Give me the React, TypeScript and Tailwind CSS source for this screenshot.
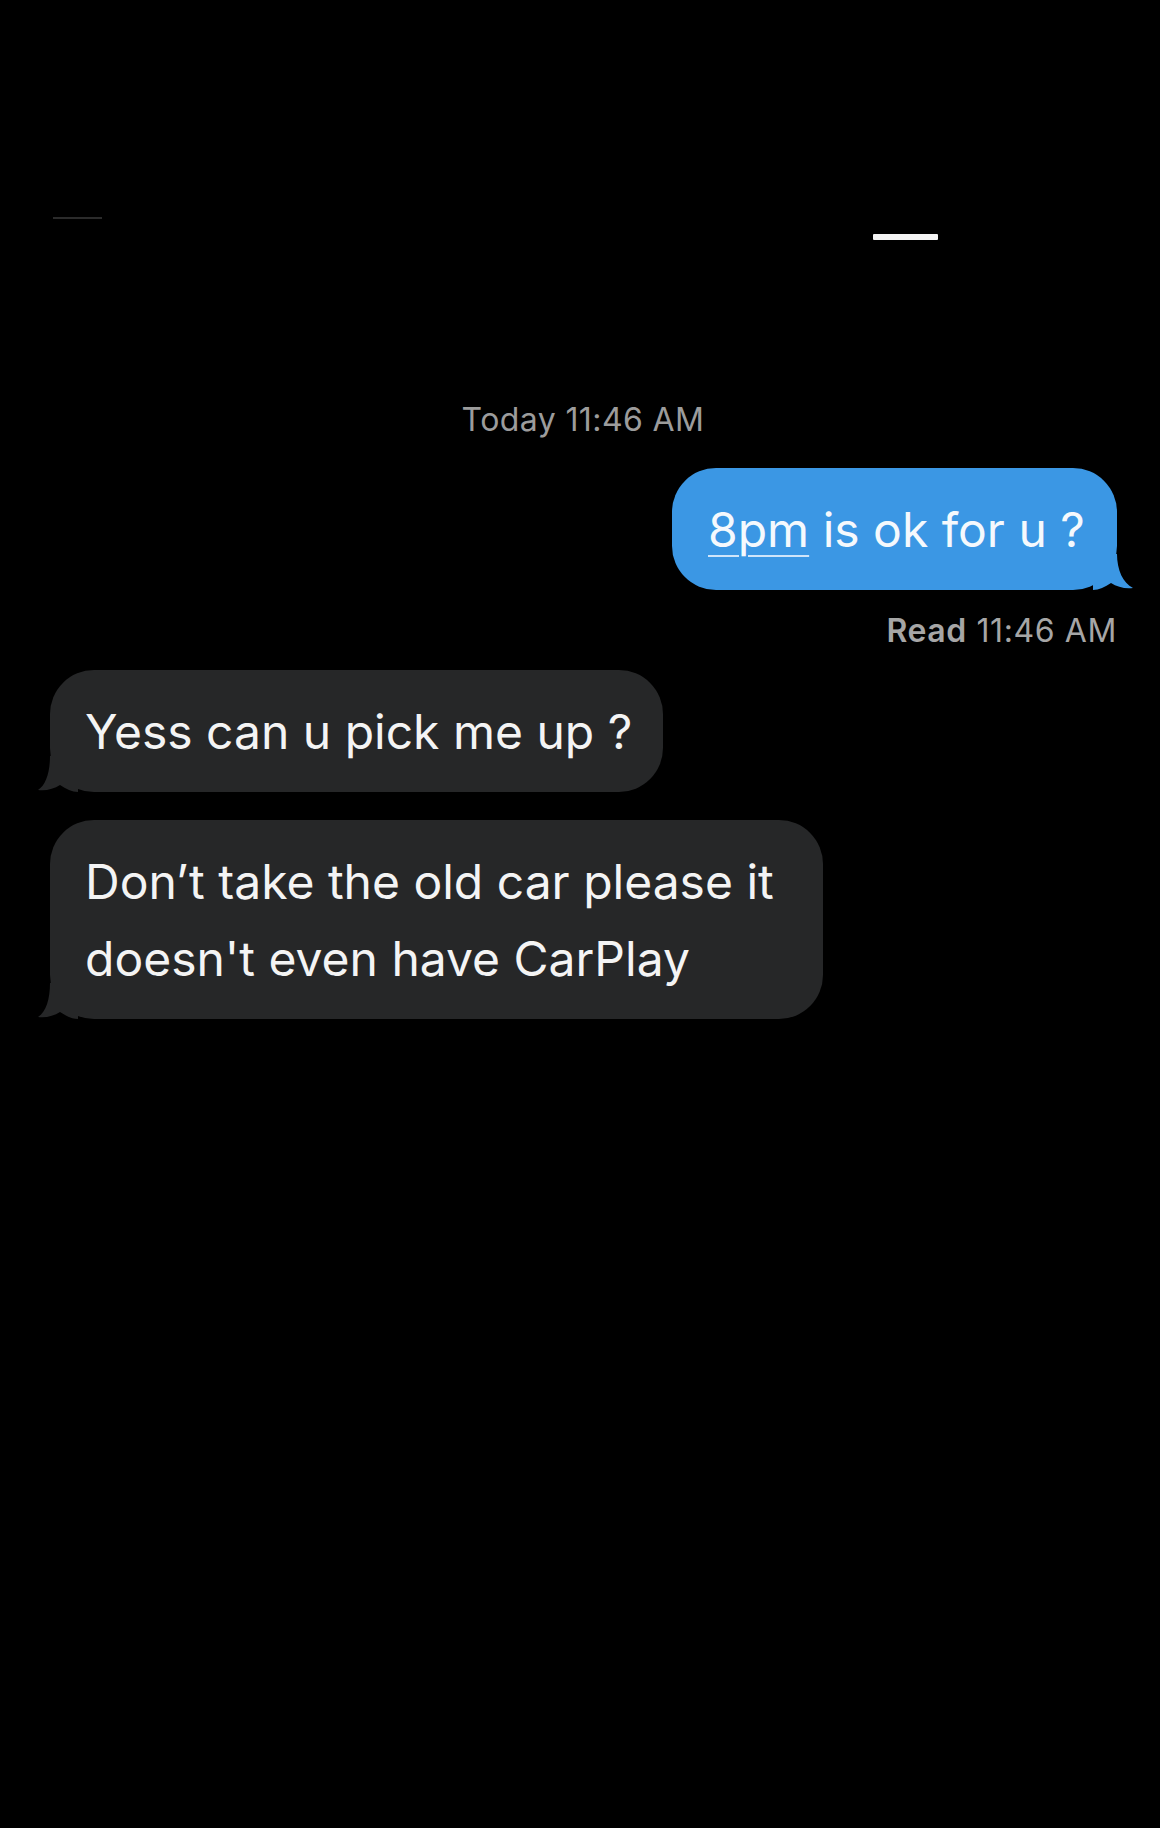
import React from 'react';

const BlueTail = () => (
  <svg
    className="absolute bottom-0 right-[-16px]"
    width="40"
    height="36"
    viewBox="0 0 40 36"
  >
    <path d="M0 0 H24 C24 16 30 29 40 34 C32 35 24 33 18 29 C12 33 6 36 0 36 Z" fill="#3b97e4" />
  </svg>
);

const GrayTail = () => (
  <svg
    className="absolute bottom-0 left-[-12px]"
    width="40"
    height="36"
    viewBox="0 0 40 36"
  >
    <path d="M40 0 H12 C12 16 8 29 0 34 C8 35 16 33 22 29 C28 33 34 36 40 36 Z" fill="#262728" />
  </svg>
);

export default function App() {
  return (
    <div
      className="w-full h-[1828px] bg-black overflow-hidden"
      style={{ fontFamily: 'Inter, "Noto Sans", "Liberation Sans", sans-serif' }}
    >
      {/* status strip */}
      <div className="flex items-start justify-between pt-[217px] pl-[53px] pr-[222px]">
        <div className="w-[49px] h-[2px] bg-[#2b2b2b]" />
        <div className="mt-[17px] w-[65px] h-[6px] bg-[#f4f4f4] rounded-[1px]" />
      </div>

      {/* day stamp */}
      <div className="mt-[161px] pl-[6px] text-center text-[32px] leading-[38px] tracking-[0.4px] text-[#9c9c9c]">
        Today 11:46 AM
      </div>

      {/* outgoing */}
      <div className="mt-[29px] flex justify-end pr-[43px]">
        <div className="relative w-[445px] rounded-[44px] bg-[#3b97e4] pl-[36px] pt-[23px] pb-[22px] text-[48px] leading-[77px] text-[#f5f9fd] whitespace-nowrap">
          <span className="underline decoration-[#cfe5fa] decoration-[1.5px] underline-offset-[8px]">8pm</span> is ok for u ?
          <BlueTail />
        </div>
      </div>
      <div className="mt-[22px] pr-[43px] text-right text-[32px] leading-[38px] tracking-[0.6px] text-[#a6a6a6]">
        <span className="font-semibold">Read</span> 11:46 AM
      </div>

      {/* incoming */}
      <div className="pl-[50px]">
        <div className="relative mt-[20px] w-[613px] rounded-[44px] bg-[#262728] pl-[35px] pt-[23px] pb-[22px] text-[48px] leading-[77px] text-[#f4f4f4] whitespace-nowrap">
          Yess can u pick me up ?
          <GrayTail />
        </div>
        <div className="relative mt-[28px] w-[773px] rounded-[44px] bg-[#262728] pl-[35px] pt-[23px] pb-[22px] text-[48px] leading-[77px] text-[#f4f4f4] whitespace-nowrap">
          Don’t take the old car please it
          <br />
          doesn't even have CarPlay
          <GrayTail />
        </div>
      </div>
    </div>
  );
}
